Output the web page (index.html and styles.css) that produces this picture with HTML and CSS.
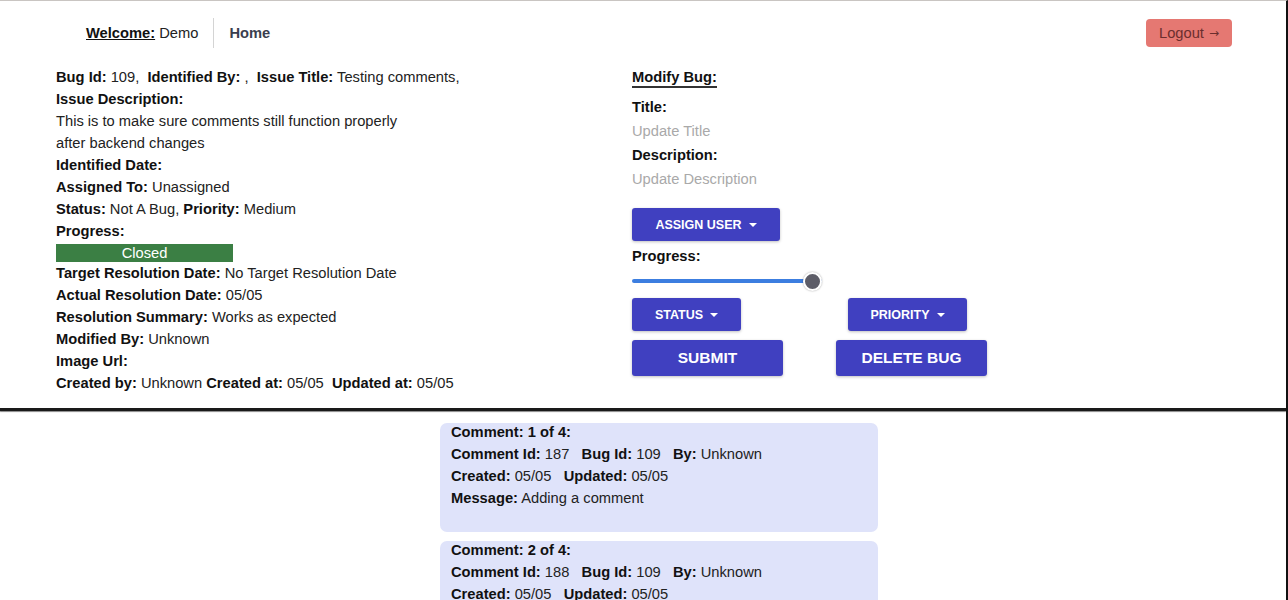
FILE: index.html
```html
<!DOCTYPE html>
<html>
<head>
<meta charset="utf-8">
<link rel="stylesheet" href="styles.css">
</head>
<body>
<div class="page">
  <nav class="nav">
    <div class="welcome"><span class="welcome-label">Welcome:</span> Demo</div>
    <div class="nav-sep"></div>
    <a class="home">Home</a>
    <button class="logout">Logout<span class="arrow">→</span></button>
  </nav>

  <section class="bug">
    <div class="details">
      <div class="line"><b>Bug Id:</b> 109,&nbsp; <b>Identified By:</b> ,&nbsp; <b>Issue Title:</b> Testing comments,</div>
      <div class="line"><b>Issue Description:</b></div>
      <div class="line">This is to make sure comments still function properly</div>
      <div class="line">after backend changes</div>
      <div class="line"><b>Identified Date:</b></div>
      <div class="line"><b>Assigned To:</b> Unassigned</div>
      <div class="line"><b>Status:</b> Not A Bug, <b>Priority:</b> Medium</div>
      <div class="line"><b>Progress:</b></div>
      <div class="progress"><div class="progress-fill" style="width:100%">Closed</div></div>
      <div class="line"><b>Target Resolution Date:</b> No Target Resolution Date</div>
      <div class="line"><b>Actual Resolution Date:</b> 05/05</div>
      <div class="line"><b>Resolution Summary:</b> Works as expected</div>
      <div class="line"><b>Modified By:</b> Unknown</div>
      <div class="line"><b>Image Url:</b></div>
      <div class="line"><b>Created by:</b> Unknown <b>Created at:</b> 05/05&nbsp; <b>Updated at:</b> 05/05</div>
    </div>

    <div class="modify">
      <div class="modify-title">Modify Bug:</div>
      <div class="field-label">Title:</div>
      <input class="field-input" type="text" placeholder="Update Title">
      <div class="field-label">Description:</div>
      <input class="field-input" type="text" placeholder="Update Description">
      <button class="btn btn-drop btn-assign">Assign User <span class="caret"></span></button>
      <div class="field-label progress-label">Progress:</div>
      <input class="slider" type="range" min="0" max="100" value="100">
      <div class="btn-row">
        <button class="btn btn-drop btn-status">Status <span class="caret"></span></button>
        <button class="btn btn-drop btn-priority">Priority <span class="caret"></span></button>
      </div>
      <div class="btn-row btn-row-big">
        <button class="btn btn-big btn-submit">Submit</button>
        <button class="btn btn-big btn-delete">Delete Bug</button>
      </div>
    </div>
  </section>

  <hr class="divider">

  <section class="comments">
    <div class="comment">
      <div class="cline"><b>Comment: 1 of 4:</b></div>
      <div class="cline"><b>Comment Id:</b> 187&nbsp;&nbsp; <b>Bug Id:</b> 109&nbsp;&nbsp; <b>By:</b> Unknown</div>
      <div class="cline"><b>Created:</b> 05/05&nbsp;&nbsp; <b>Updated:</b> 05/05</div>
      <div class="cline"><b>Message:</b> Adding a comment</div>
    </div>
    <div class="comment">
      <div class="cline"><b>Comment: 2 of 4:</b></div>
      <div class="cline"><b>Comment Id:</b> 188&nbsp;&nbsp; <b>Bug Id:</b> 109&nbsp;&nbsp; <b>By:</b> Unknown</div>
      <div class="cline"><b>Created:</b> 05/05&nbsp;&nbsp; <b>Updated:</b> 05/05</div>
      <div class="cline"><b>Message:</b> Another comment</div>
    </div>
  </section>
</div>
</body>
</html>
```

FILE: styles.css
```css
* { box-sizing: border-box; }
html, body { margin: 0; padding: 0; }
body {
  font-family: "Liberation Sans", Arial, sans-serif;
  font-size: 14.7px;
  color: #1c1c1c;
  background: #fff;
  width: 1288px;
  height: 600px;
  overflow: hidden;
}
.page {
  height: 600px;
  border-top: 1px solid #c9c5c2;
  border-right: 2px solid #111;
  overflow: hidden;
}
b { font-weight: bold; color: #111; }

.nav {
  display: flex;
  align-items: center;
  height: 63px;
  padding: 0 54px 0 86px;
}
.welcome { color: #222; }
.welcome-label { font-weight: bold; text-decoration: underline; color: #111; }
.nav-sep {
  width: 1px;
  height: 30px;
  background: #d4d4d4;
  margin: 0 15px 0 15px;
}
.home { font-weight: bold; color: #3a3e4e; }
.logout {
  margin-left: auto;
  background: #e57872;
  color: #6b2e2e;
  border: none;
  border-radius: 4px;
  height: 28px;
  width: 86px;
  font-family: "Liberation Sans", Arial, sans-serif;
  font-size: 14.7px;
  padding: 0;
  margin-top: 1px;
  display: inline-flex;
  align-items: center;
  justify-content: center;
}
.arrow { font-size: 12px; font-family: "DejaVu Sans", sans-serif; margin-left: 5px; }

.bug {
  display: grid;
  grid-template-columns: 576px 1fr;
  padding-left: 56px;
}
.details { padding-top: 2px; }
.line { line-height: 22px; height: 22px; white-space: nowrap; color: #222; }
.progress {
  width: 177px;
  height: 18px;
  margin: 2px 0 0 0;
  background: #e9ecef;
}
.progress-fill {
  height: 18px;
  background: #3b7f44;
  color: #fff;
  text-align: center;
  line-height: 18px;
}

.modify { padding-top: 4px; display: flex; flex-direction: column; align-items: flex-start; }
.modify-title {
  font-weight: bold;
  color: #111;
  line-height: 18px;
  border-bottom: 2px solid #333;
}
.field-label { font-weight: bold; color: #111; line-height: 22px; }
.modify-title + .field-label { margin-top: 8px; }
.field-input {
  border: none;
  outline: none;
  padding: 0;
  font-family: "Liberation Sans", Arial, sans-serif;
  font-size: 14.7px;
  line-height: 26px;
  height: 26px;
  width: 300px;
  background: transparent;
}
.field-input::placeholder { color: #a9a9a9; }

.btn {
  background: #4040c0;
  color: #fff;
  border: none;
  border-radius: 3px;
  font-family: "Liberation Sans", Arial, sans-serif;
  font-weight: bold;
  text-transform: uppercase;
  box-shadow: 0 1px 3px rgba(0,0,0,0.25);
  padding: 0;
  display: inline-flex;
  align-items: center;
  justify-content: center;
}
.btn-drop { height: 33px; font-size: 12.5px; }
.caret {
  display: inline-block;
  width: 0; height: 0;
  border-left: 4px solid transparent;
  border-right: 4px solid transparent;
  border-top: 4px solid #fff;
  margin-left: 7px;
}
.btn-assign { width: 148px; margin-top: 16px; }
.progress-label { margin-top: 4px; }
.slider {
  -webkit-appearance: none;
  appearance: none;
  width: 190px;
  height: 20px;
  margin: 4px 0 0 0;
  background: transparent;
}
.slider::-webkit-slider-runnable-track {
  height: 4px;
  background: #3c7ee0;
  border-radius: 2px;
}
.slider::-webkit-slider-thumb {
  -webkit-appearance: none;
  width: 19px; height: 19px;
  border-radius: 50%;
  background: #5d5d68;
  border: 2px solid #fff;
  box-shadow: 0 0 2px rgba(0,0,0,0.35);
  margin-top: -7.5px;
}
.btn-row { display: flex; margin-top: 7px; }
.btn-status { width: 109px; }
.btn-priority { width: 119px; margin-left: 107px; }
.btn-row-big { margin-top: 9px; }
.btn-big { height: 36px; font-size: 15.5px; width: 151px; }
.btn-delete { margin-left: 53px; }

.divider {
  border: none;
  height: 3px;
  background: #1a1a1a;
  margin: 14px 0 0 0;
  box-shadow: 0 1px 1px #888;
}

.comments {
  display: flex;
  flex-direction: column;
  align-items: center;
  gap: 9px;
  padding-top: 12px;
  padding-left: 32px;
}
.comment {
  width: 438px;
  height: 109px;
  background: #dfe3fa;
  border-radius: 7px;
  padding: 0 11px;
}
.cline { line-height: 22px; height: 22px; color: #222; white-space: nowrap; }
.cline:first-child { margin-top: -2px; }
```
